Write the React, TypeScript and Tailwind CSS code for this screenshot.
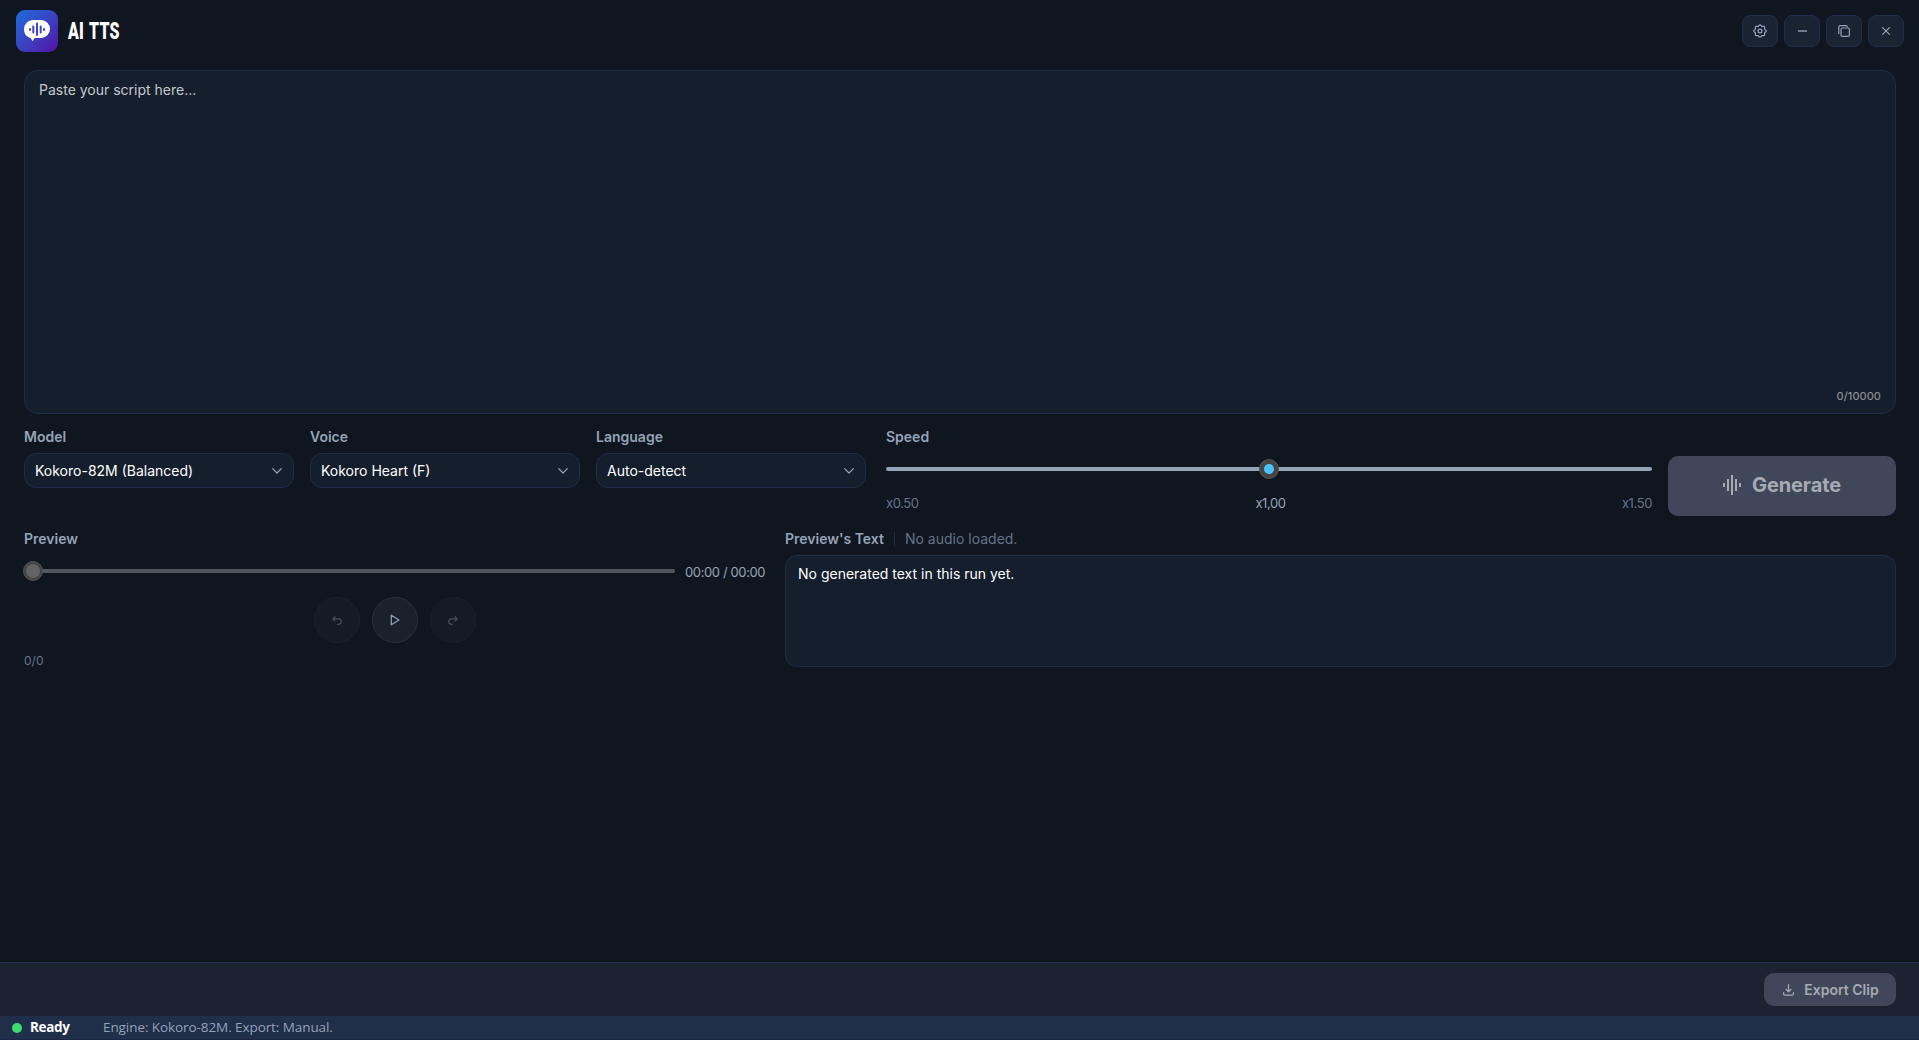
import React from "react";

const BARS = [
  { x: 0, h: 4 },
  { x: 4, h: 12 },
  { x: 8, h: 20 },
  { x: 12, h: 12 },
  { x: 16, h: 4 },
];

function Logo() {
  return (
    <svg width="42" height="42" viewBox="0 0 42 42" className="shrink-0">
      <defs>
        <linearGradient id="logoFill" x1="0" y1="0" x2="1" y2="1">
          <stop offset="0" stopColor="#1f6bdc" />
          <stop offset="0.55" stopColor="#3b3fc0" />
          <stop offset="1" stopColor="#560fa8" />
        </linearGradient>
      </defs>
      <rect width="42" height="42" rx="9" fill="url(#logoFill)" />
      <path d="M17 10h8a9 9 0 0 1 0 18h-6.500l-1.800 3.200L14.600 28C10.500 27 8 23.500 8 19.200A9 9 0 0 1 17 10z" fill="#fff" />
      <g fill="#3b45c4">
        <rect x="13" y="18" width="2" height="3" rx="1" />
        <rect x="16.300" y="15.500" width="2" height="8" rx="1" />
        <rect x="20" y="12.500" width="2" height="13.500" rx="1" />
        <rect x="23.700" y="15.500" width="2" height="8" rx="1" />
        <rect x="27" y="18" width="2" height="3" rx="1" />
      </g>
    </svg>
  );
}

const line = {
  fill: "none",
  stroke: "currentColor",
  strokeWidth: 1.2,
  strokeLinecap: "round" as const,
  strokeLinejoin: "round" as const,
};

// Eight rounded teeth around the hub of the settings gear.
const GEAR_PATH =
  Array.from({ length: 64 }, (_, i) => {
    const a = (i / 64) * Math.PI * 2;
    const r = 5.6 + 0.65 * Math.cos(a * 8);
    return `${i === 0 ? "M" : "L"}${(7 + r * Math.cos(a)).toFixed(2)} ${(7 + r * Math.sin(a)).toFixed(2)}`;
  }).join("") + "z";

function GearIcon() {
  return (
    <svg width="14" height="14" viewBox="0 0 14 14" {...line}>
      <path d={GEAR_PATH} />
      <circle cx="7" cy="7" r="1.900" />
    </svg>
  );
}

function WindowButton({ children }: { children: React.ReactNode }) {
  return (
    <button className="flex h-8 w-9 items-center justify-center rounded-lg border border-[#1f2f4b] bg-[#1a2332] text-[#94a3b8]">
      {children}
    </button>
  );
}

function Select({ label, value }: { label: string; value: string }) {
  return (
    <div className="w-[270px]">
      <div className="h-5 text-sm leading-5 font-semibold text-[#94a3b8]">{label}</div>
      <div className="mt-1.5 flex h-[35px] items-center justify-between rounded-xl border border-[#1e2d47] bg-[#151e2c] pr-[11px] pl-2.5 text-sm text-white">
        <span>{value}</span>
        <svg width="10" height="6" viewBox="0 0 10 6" className="text-[#94a3b8]" {...line}>
          <path d="M.7.700L5 5 9.300.700" />
        </svg>
      </div>
    </div>
  );
}

function UndoIcon({ flip }: { flip?: boolean }) {
  return (
    <svg width="10" height="9" viewBox="0 0 10 9" className={flip ? "-scale-x-100" : ""} {...line}>
      <path d="M3 .7L.7 2.900 3 5.100M.7 2.900h5.900a2.700 2.700 0 0 1 0 5.400H5.600" />
    </svg>
  );
}

export default function App() {
  return (
    <div className="flex h-[1040px] w-full flex-col overflow-hidden bg-[#101620] font-['Inter',sans-serif] text-sm">
      <header className="flex h-[62px] shrink-0 items-center justify-between pr-[15px] pl-4">
        <div className="flex items-center gap-2.5">
          <Logo />
          <h1 className="origin-left scale-x-[0.69] font-['Roboto',sans-serif] text-[23px] leading-none font-black tracking-[0.300px] [word-spacing:2px] text-white">
            AI TTS
          </h1>
        </div>
        <div className="flex gap-1.5">
          <WindowButton>
            <GearIcon />
          </WindowButton>
          <WindowButton>
            <span className="h-0.5 w-[9px] bg-[#6d7a8d]" />
          </WindowButton>
          <WindowButton>
            <svg width="12" height="12" viewBox="0 0 12 12" {...line}>
              <rect x="3" y="3" width="8.400" height="8.400" rx="1.500" />
              <path d="M.8 8.500V2.300A1.500 1.500 0 0 1 2.300.6h5.900a1 1 0 0 1 1 1" />
            </svg>
          </WindowButton>
          <WindowButton>
            <svg width="8" height="8" viewBox="0 0 8 8" {...line}>
              <path d="M.6.6l6.800 6.800M7.400.6L.6 7.400" />
            </svg>
          </WindowButton>
        </div>
      </header>

      <main className="flex grow flex-col pt-2 pr-[23px] pl-6">
        <section className="flex h-[344px] flex-col justify-between rounded-[14px] border border-[#1e2d47] bg-[#151e2c] px-3.5 pt-[9px] pb-[9px]">
          <p className="leading-5 text-[#c5c8cc]">Paste your script here...</p>
          <p className="text-right text-[11px] leading-4 font-medium tracking-[0.050px] text-[#8b8d90]">0/10000</p>
        </section>

        <section className="mt-[13px] flex h-[89px] gap-4">
          <Select label="Model" value="Kokoro-82M (Balanced)" />
          <Select label="Voice" value="Kokoro Heart (F)" />
          <Select label="Language" value="Auto-detect" />
          <div className="ml-1 grow">
            <div className="h-5 leading-5 font-semibold text-[#94a3b8]">Speed</div>
            <div className="relative mt-5 h-1 rounded-full bg-[#94a3b8]">
              <div className="absolute top-1/2 left-1/2 flex size-5 -translate-x-1/2 -translate-y-1/2 items-center justify-center rounded-full border border-[#525252] bg-[#454545]">
                <div className="size-2.5 rounded-full bg-[#4cc2ff]" />
              </div>
            </div>
            <div className="mt-[23px] grid grid-cols-3 text-[13px] leading-[18px] tracking-[-0.400px] text-[#64748b]">
              <span>x0.50</span>
              <span className="pl-[3px] text-center text-[#94a3b8]">x1,00</span>
              <span className="text-right">x1.50</span>
            </div>
          </div>
          <button className="mt-[29px] flex h-[60px] w-[228px] items-center justify-center gap-[11px] rounded-[10px] bg-[#40475a] pb-0.5 text-xl font-bold tracking-[-0.100px] text-[#a6aab2]">
            <svg width="18" height="20" viewBox="0 0 18 20" fill="currentColor">
              {BARS.map((b) => (
                <rect key={b.x} x={b.x} y={10 - b.h / 2} width="2" height={b.h} />
              ))}
            </svg>
            Generate
          </button>
        </section>

        <section className="mt-[13px] flex gap-5">
          <div className="w-[741px]">
            <div className="h-5 leading-5 font-semibold text-[#94a3b8]">Preview</div>
            <div className="mt-[13px] flex h-[18px] items-center gap-2.5">
              <div className="relative h-1 grow rounded-full bg-[#53575d]">
                <div className="absolute top-1/2 -left-px flex size-5 -translate-y-1/2 items-center justify-center rounded-full border border-[#525252] bg-[#434545]">
                  <div className="size-3.5 rounded-full bg-[#636363]" />
                </div>
              </div>
              <span className="w-20 pt-0.5 text-[13px] tracking-[-0.380px] whitespace-nowrap text-[#94a3b8]">00:00 / 00:00</span>
            </div>
            <div className="mt-[17px] flex justify-center gap-3">
              <button className="flex size-[46px] items-center justify-center rounded-full border border-[#1c222c] bg-[#141b25] text-[#465060]">
                <UndoIcon />
              </button>
              <button className="flex size-[46px] items-center justify-center rounded-full border border-[#2a313b] bg-[#1a212c] pl-px text-[#94a3b8]">
                <svg width="10" height="12" viewBox="0 0 10 12" {...line}>
                  <path d="M1.300 1.200v9.600L9 6z" />
                </svg>
              </button>
              <button className="flex size-[46px] items-center justify-center rounded-full border border-[#1c222c] bg-[#141b25] text-[#465060]">
                <UndoIcon flip />
              </button>
            </div>
            <div className="mt-2.5 text-xs leading-4 text-[#64748b]">0/0</div>
          </div>
          <div className="grow">
            <div className="flex h-5 items-center leading-5">
              <span className="font-semibold text-[#94a3b8]">Preview's Text</span>
              <span className="mx-2.5 h-3.5 w-px bg-[#1e2d47]" />
              <span className="text-[#64748b]">No audio loaded.</span>
            </div>
            <div className="mt-1.5 h-[112px] rounded-xl border border-[#1e2d47] bg-[#151e2c] px-3 pt-2 leading-5 text-white">
              No generated text in this run yet.
            </div>
          </div>
        </section>
      </main>

      <div className="flex h-[54px] shrink-0 items-center justify-end border-t border-[#1f2f4b] bg-[#1b2333] pr-[23px]">
        <button className="flex h-[33px] w-[132px] items-center justify-center gap-2.5 rounded-[10px] bg-[#40475a] pl-0.5 font-semibold text-[#a6aab2]">
          <svg width="11" height="12" viewBox="0 0 11 12" {...line}>
            <path d="M5.500.6v7M3 5.300l2.500 2.400L8 5.300M.6 8.500v1.200a1.500 1.500 0 0 0 1.500 1.500h6.800a1.500 1.500 0 0 0 1.500-1.500V8.500" />
          </svg>
          Export Clip
        </button>
      </div>
      <footer className="flex h-6 shrink-0 items-center border-b border-[#1c2547] bg-[#1f2e49] pl-3 font-['Open_Sans',sans-serif] text-[13px]">
        <span className="size-2.5 rounded-full bg-[#3ddc72]" />
        <span className="ml-2 w-[73px] pt-px text-[13.500px] font-bold tracking-[-0.350px] text-white">Ready</span>
        <span className="pt-px text-[13.500px] tracking-[-0.080px] text-[#94a3b8]">Engine: Kokoro-82M. Export: Manual.</span>
      </footer>
    </div>
  );
}
